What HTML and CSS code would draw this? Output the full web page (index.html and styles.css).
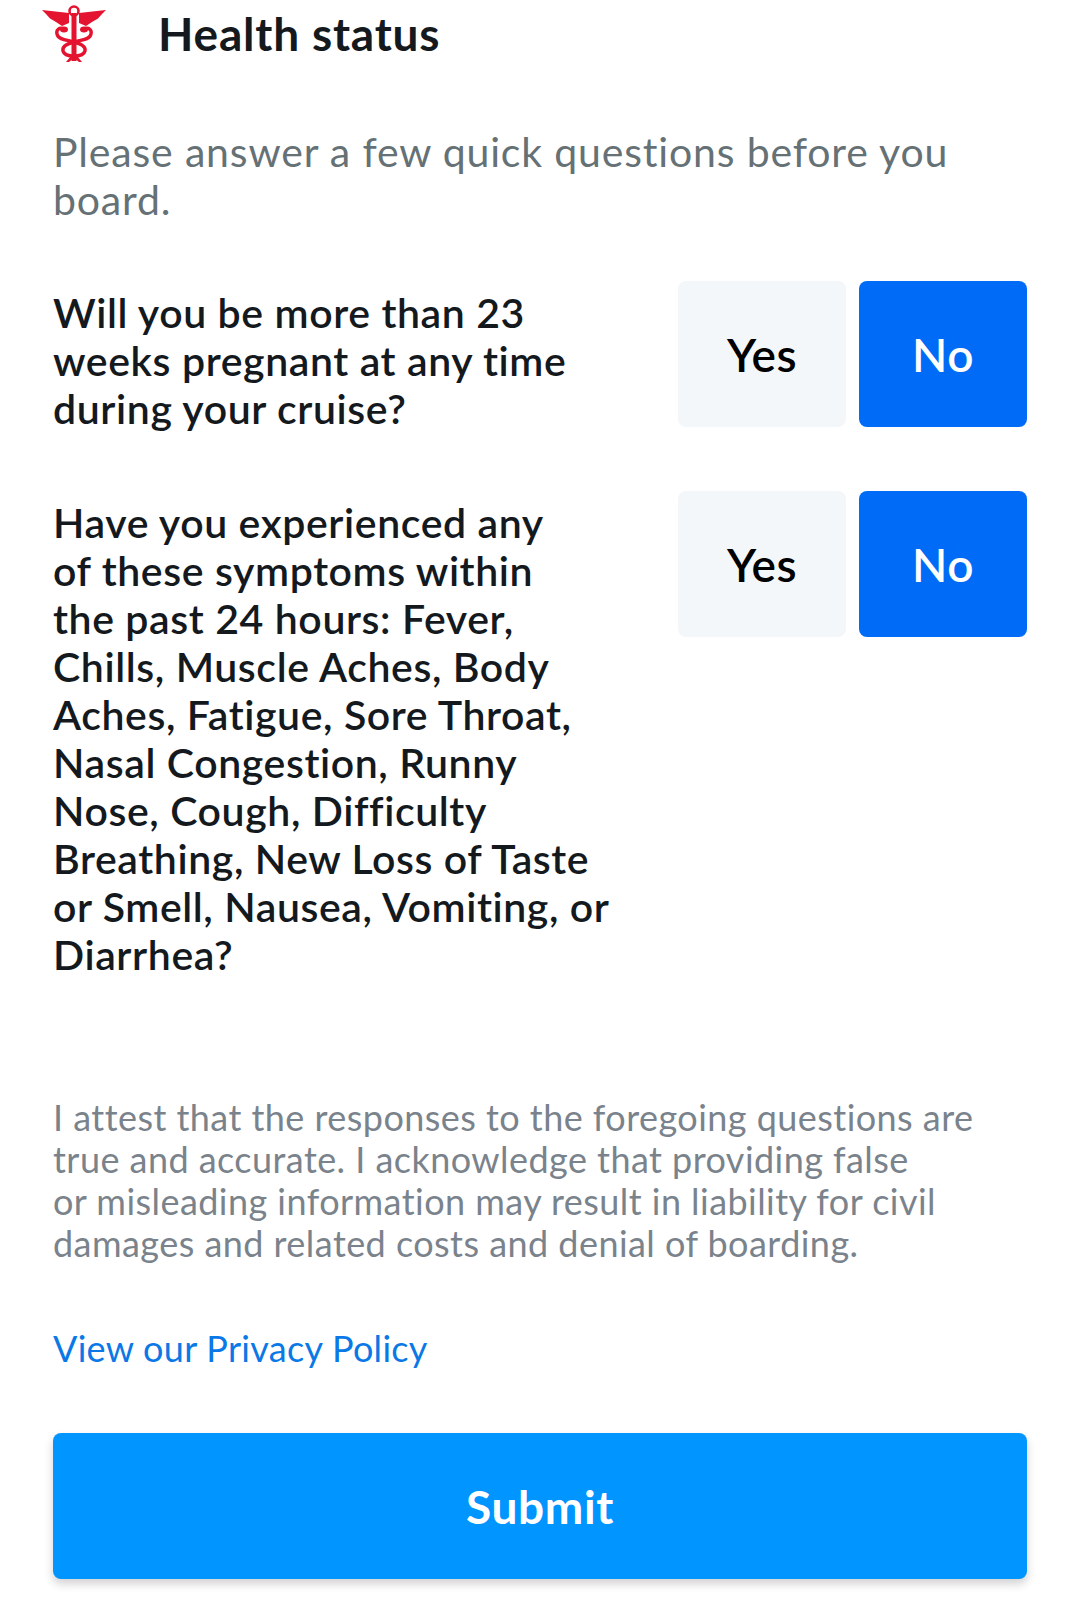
FILE: index.html
```html
<!DOCTYPE html>
<html lang="en">
<head>
<meta charset="utf-8">
<title>Health status</title>
<link rel="stylesheet" href="styles.css">
</head>
<body>
<main class="page">
  <header class="head">
    <svg class="logo" viewBox="0 0 64 60" aria-hidden="true">
      <g fill="#e4132f">
        <path d="M0 6 L27 9 L27 19 L20 22 L14 18 L8 14.5 L4 10 Z"/>
        <path d="M64 6 L37 9 L37 19 L44 22 L50 18 L56 14.5 L60 10 Z"/>
        <rect x="29.5" y="9" width="5" height="48"/>
        <ellipse cx="22" cy="25.5" rx="4" ry="3"/>
        <ellipse cx="42" cy="25.5" rx="4" ry="3"/>
        <path d="M29 52 L24 58 L27 58 L32 54 L37 58 L40 58 L35 52 Z"/>
      </g>
      <g fill="none" stroke="#e4132f">
        <circle cx="32" cy="7" r="4.5" stroke-width="2.6"/>
        <path stroke-width="3.4" d="M22 25 C17 23 14 26 15 30 C16 36 26 36 32 38 C40 40 44 43 43 47 C42 51 37 52 32 52"/>
        <path stroke-width="3.4" d="M42 25 C47 23 50 26 49 30 C48 36 38 36 32 38 C24 40 20 43 21 47 C22 51 27 52 32 52"/>
      </g>
    </svg>
    <h1 class="title">Health status</h1>
  </header>
  <p class="intro">Please answer a few quick questions before you<br>board.</p>
  <section class="question q-first">
    <p class="q-text">Will you be more than 23<br>weeks pregnant at any time<br>during your cruise?</p>
    <div class="choices"><button class="choice">Yes</button><button class="choice on">No</button></div>
  </section>
  <section class="question q-second">
    <p class="q-text">Have you experienced any<br>of these symptoms within<br>the past 24 hours: Fever,<br>Chills, Muscle Aches, Body<br>Aches, Fatigue, Sore Throat,<br>Nasal Congestion, Runny<br>Nose, Cough, Difficulty<br>Breathing, New Loss of Taste<br>or Smell, Nausea, Vomiting, or<br>Diarrhea?</p>
    <div class="choices"><button class="choice">Yes</button><button class="choice on">No</button></div>
  </section>
  <p class="attest">I attest that the responses to the foregoing questions are<br>true and accurate. I acknowledge that providing false<br>or misleading information may result in liability for civil<br>damages and related costs and denial of boarding.</p>
  <a class="policy" href="#">View our Privacy Policy</a>
  <button class="submit">Submit</button>
</main>
</body>
</html>
```
FILE: styles.css
```css
* { box-sizing: border-box; }
html, body { margin: 0; background: #fff; }
body { font-family: Lato, "Open Sans", sans-serif; }
.page { width: 1080px; height: 1622px; padding: 0 53px; overflow: hidden; display: flex; flex-direction: column; }
.head { display: flex; align-items: center; height: 68px; margin-left: -11px; }
.logo { width: 64px; height: 60px; margin-right: 52px; flex: none; }
.title { margin: 0; font-size: 46px; line-height: 68px; font-weight: 700; color: #14191e; letter-spacing: .8px; }
.intro { margin: 60px 0 0; font-size: 41px; line-height: 48px; color: #667176; letter-spacing: .83px; }
.question { display: flex; justify-content: space-between; align-items: flex-start; }
.q-first { margin-top: 57px; }
.q-second { margin-top: 58px; }
.q-text { margin: 8px 0 0; width: 570px; font-size: 41px; line-height: 48px; font-weight: 600; color: #14191e; white-space: nowrap; letter-spacing: .6px; }
.choices { display: flex; gap: 13px; flex: none; }
.choice { width: 168px; height: 146px; border: 0; border-radius: 8px; background: #f4f7fa; color: #000; font: 600 46px Lato, sans-serif; letter-spacing: .5px; }
.choice.on { background: #006bf6; color: #fff; }
.attest { margin: 117px 0 0; font-size: 36px; line-height: 42px; color: #7a838c; letter-spacing: .45px; }
.policy { margin-top: 63px; font-size: 36px; line-height: 42px; color: #0a78e6; text-decoration: none; letter-spacing: .3px; }
.submit { margin-top: 64px; width: 974px; height: 146px; flex: none; border: 0; border-radius: 8px; background: #0095ff; color: #fff; font: 700 46px Lato, sans-serif; letter-spacing: .6px; box-shadow: 0 5px 10px rgba(0,0,0,.18); }
```
